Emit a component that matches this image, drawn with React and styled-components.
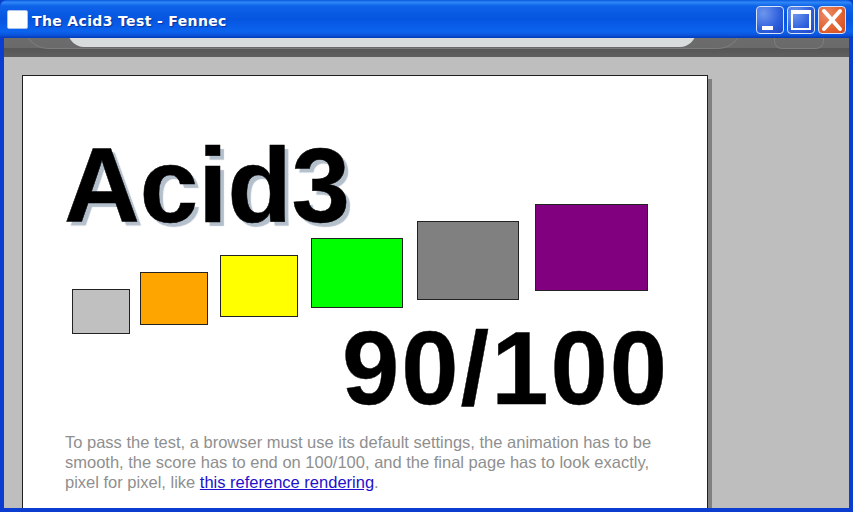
import React from "react";
import styled, { createGlobalStyle } from "styled-components";

const Global = createGlobalStyle`
  html, body { margin: 0; padding: 0; background: #0a3fc8; overflow: hidden; }
`;

const Frame = styled.div`
  width: 853px; height: 512px; display: flex; flex-direction: column; overflow: hidden;
  background: #0b3ed0; border-radius: 7px 7px 0 0;
`;
const TitleBar = styled.div`
  height: 38px; flex: none; display: flex; align-items: center; padding: 0 7px 0 7px; box-sizing: border-box;
  background: linear-gradient(180deg, #0a58e2 0%, #2f88f6 6%, #0e62e8 16%, #0655e0 50%, #0b63ee 82%, #0a55dc 92%, #0338b8 100%);
`;
const WinIcon = styled.div`
  width: 21px; height: 19px; box-sizing: border-box; background: #fff; border: 1px solid #a9c3ef; border-radius: 2px; flex: none;
`;
const Title = styled.div`
  margin-left: 4px; color: #fff; font: bold 14px "DejaVu Sans", sans-serif; letter-spacing: 0.36px; flex: 1; text-shadow: 1px 1px 1px #0a2f9a; white-space: nowrap; margin-top: 3px;
`;
const Buttons = styled.div`
  display: flex; gap: 3px; margin-top: 2px;
`;
const CtrlButton = styled.div`
  width: 28px; height: 28px; box-sizing: border-box; border: 1px solid #d7e4fb; border-radius: 4px;
  display: flex; align-items: center; justify-content: center;
  background: ${p => p.$close
    ? "radial-gradient(circle at 30% 30%, #ec8a66, #e2602f 60%, #cf4a1c)"
    : "radial-gradient(circle at 25% 25%, #6e96ee, #2d5fdc 60%, #1c45c4)"};
`;
const Client = styled.div`
  flex: 1; min-height: 0; display: flex; flex-direction: column; margin: 0 4px 4px; overflow: hidden;
`;
const Toolbar = styled.div`
  height: 19px; flex: none; background: linear-gradient(180deg, #6c6c6c 0%, #6a6a6a 50%, #565656 56%, #606060 100%); position: relative; overflow: hidden;
`;
const UrlBar = styled.div`
  position: absolute; left: 64px; top: -14px; width: 628px; height: 23px; border-radius: 0 0 16px 16px; background: #d8dcdc;
`;
const UrlRim = styled.div`
  position: absolute; left: 20px; top: -14px; width: 716px; height: 24px; border-radius: 0 0 24px 24px; border: 1px solid #7c7c7c; border-top: 0;
`;
const GoRim = styled.div`
  position: absolute; left: 770px; top: -14px; width: 48px; height: 24px; border-radius: 0 0 8px 8px; border: 1px solid #7c7c7c; border-top: 0;
`;
const Viewport = styled.div`
  flex: 1; min-height: 0; background: #bebebe; padding: 18px 0 0 18px; overflow: hidden;
`;
const Page = styled.div`
  width: 686px; height: 440px; box-sizing: border-box; background: #fff; border: 1px solid #202020; border-bottom: 0;
  box-shadow: 4px 4px 0 #808080; padding: 57px 0 0 41px; position: relative;
`;
const Heading = styled.h1`
  margin: 0; font: bold 105px/105px "Liberation Sans", Arial, sans-serif; color: #000; height: 105px;
  -webkit-text-stroke: 0.5px #000;
  text-shadow: 4px 4px 1px #b4bfcc;
`;
const Boxes = styled.div`
  display: flex; align-items: flex-start; height: 130px; margin-top: -34px; padding-left: 8px;
`;
const Box = styled.div`
  flex: none; box-sizing: border-box; border: 1px solid #222; background: ${p => p.$c};
  width: ${p => p.$w}px; height: ${p => p.$h}px; margin-top: ${p => p.$t}px; margin-left: ${p => p.$l}px;
`;
const Score = styled.div`
  position: absolute; right: 38px; top: 240px; font: bold 103px/106px "Liberation Sans", Arial, sans-serif; color: #000;
  letter-spacing: 2px; -webkit-text-stroke: 0.4px #000;
`;
const Note = styled.p`
  margin: 0; position: absolute; left: 42px; top: 356px; width: 600px; font: 16.5px/20px "Liberation Sans", Arial, sans-serif; color: #8f8f8f;
`;
const RefLink = styled.a`
  color: #2211cc; text-decoration: underline;
`;

const boxes = [
  { c: "#c0c0c0", w: 58, h: 45, t: 85, l: 0 },
  { c: "#ffa500", w: 68, h: 53, t: 68, l: 10 },
  { c: "#ffff00", w: 78, h: 62, t: 51, l: 12 },
  { c: "#00ff00", w: 92, h: 70, t: 34, l: 13 },
  { c: "#808080", w: 102, h: 79, t: 17, l: 14 },
  { c: "#800080", w: 113, h: 87, t: 0, l: 16 },
];

export default function App() {
  return (
    <Frame>
      <Global />
      <TitleBar>
        <WinIcon />
        <Title>The Acid3 Test - Fennec</Title>
        <Buttons>
          <CtrlButton>
            <svg width="26" height="26" viewBox="0 0 26 26"><rect x="5" y="19" width="11" height="4" fill="#fff" /></svg>
          </CtrlButton>
          <CtrlButton>
            <svg width="26" height="26" viewBox="0 0 26 26"><rect x="4" y="4" width="18" height="18" fill="none" stroke="#fff" strokeWidth="2" /><rect x="3" y="3" width="20" height="4" fill="#fff" /></svg>
          </CtrlButton>
          <CtrlButton $close>
            <svg width="26" height="26" viewBox="0 0 26 26"><path d="M5 4 L21 22 M21 4 L5 22" stroke="#fff" strokeWidth="4" strokeLinecap="round" /></svg>
          </CtrlButton>
        </Buttons>
      </TitleBar>
      <Client>
        <Toolbar>
          <UrlRim />
          <UrlBar />
          <GoRim />
        </Toolbar>
        <Viewport>
          <Page>
            <Heading>Acid3</Heading>
            <Boxes>
              {boxes.map(b => <Box key={b.c} $c={b.c} $w={b.w} $h={b.h} $t={b.t} $l={b.l} />)}
            </Boxes>
            <Score>90/100</Score>
            <Note>
              To pass the test, a browser must use its default settings, the animation has to be
              smooth, the score has to end on 100/100, and the final page has to look exactly,
              pixel for pixel, like <RefLink>this reference rendering</RefLink>.
            </Note>
          </Page>
        </Viewport>
      </Client>
    </Frame>
  );
}
